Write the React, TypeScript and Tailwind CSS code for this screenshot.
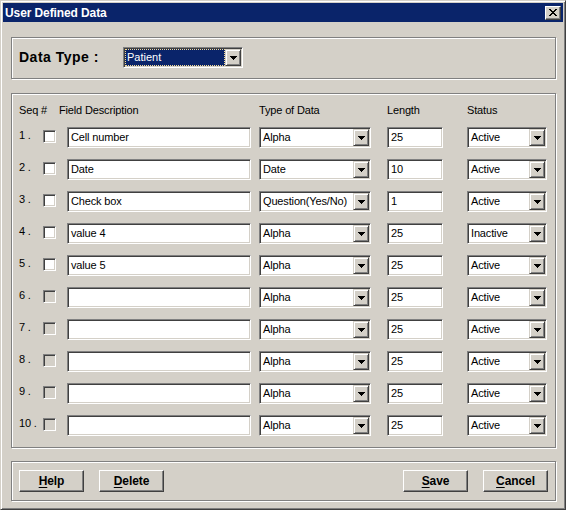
import React from "react";

const sunken =
  "border border-t-[#808080] border-l-[#808080] border-b-white border-r-white shadow-[inset_1px_1px_0_#404040,inset_-1px_-1px_0_#d4d0c8] p-[1px]";
const scrollBtn =
  "border border-t-[#d4d0c8] border-l-[#d4d0c8] border-b-[#404040] border-r-[#404040] shadow-[inset_1px_1px_0_#fff,inset_-1px_-1px_0_#808080] bg-[#d4d0c8]";
const etched = "border border-[#808080] shadow-[inset_1px_1px_0_#fff,1px_1px_0_#fff]";

const ROWS = [
  { desc: "Cell number", type: "Alpha", len: "25", status: "Active", on: true },
  { desc: "Date", type: "Date", len: "10", status: "Active", on: true },
  { desc: "Check box", type: "Question(Yes/No)", len: "1", status: "Active", on: true },
  { desc: "value 4", type: "Alpha", len: "25", status: "Inactive", on: true },
  { desc: "value 5", type: "Alpha", len: "25", status: "Active", on: true },
  { desc: "", type: "Alpha", len: "25", status: "Active", on: false },
  { desc: "", type: "Alpha", len: "25", status: "Active", on: false },
  { desc: "", type: "Alpha", len: "25", status: "Active", on: false },
  { desc: "", type: "Alpha", len: "25", status: "Active", on: false },
  { desc: "", type: "Alpha", len: "25", status: "Active", on: false },
];

function Arrow() {
  return (
    <svg width="7" height="4" viewBox="0 0 7 4" shapeRendering="crispEdges">
      <rect x="0" y="0" width="7" height="1" fill="#000" />
      <rect x="1" y="1" width="5" height="1" fill="#000" />
      <rect x="2" y="2" width="3" height="1" fill="#000" />
      <rect x="3" y="3" width="1" height="1" fill="#000" />
    </svg>
  );
}

function DropBtn() {
  return (
    <div className={`${scrollBtn} flex h-[17px] w-[16px] shrink-0 items-center justify-center`}>
      <Arrow />
    </div>
  );
}

function Combo({ value, width }: { value: string; width: string }) {
  return (
    <div className={`${sunken} flex h-[21px] ${width} bg-white`}>
      <div className="flex-1 overflow-hidden whitespace-nowrap pl-[2px] leading-[17px]">{value}</div>
      <DropBtn />
    </div>
  );
}

function CloseGlyph() {
  const rows = [0, 1, 2, 3, 4, 5, 6];
  return (
    <svg width="8" height="7" viewBox="0 0 8 7" shapeRendering="crispEdges">
      {rows.map((r) => (
        <g key={r}>
          <rect x={r} y={r} width="2" height="1" fill="#000" />
          <rect x={6 - r} y={r} width="2" height="1" fill="#000" />
        </g>
      ))}
    </svg>
  );
}

function Button({ k, rest }: { k: string; rest: string }) {
  return (
    <div className="flex h-[22px] w-[65px] items-center justify-center border border-t-white border-l-white border-b-[#404040] border-r-[#404040] bg-[#d4d0c8] text-[12px] font-bold tracking-[-0.1px] shadow-[inset_-1px_-1px_0_#808080]">
      <span>
        <span className="underline underline-offset-[2px]">{k}</span>
        {rest}
      </span>
    </div>
  );
}

export default function App() {
  return (
    <div className="h-[510px] w-[566px] border border-t-[#d4d0c8] border-l-[#d4d0c8] border-b-[#404040] border-r-[#404040] bg-[#d4d0c8] p-[2px] font-['Liberation_Sans',Arial,sans-serif] text-[11px] text-black shadow-[inset_1px_1px_0_#fff,inset_-1px_-1px_0_#808080]">
      {/* Title bar */}
      <div className="flex h-[19px] items-center justify-between bg-[#0a246a] pl-[2px] pr-[2px]">
        <span className="text-[12px] font-bold tracking-[-0.1px] text-white">User Defined Data</span>
        <div className="flex h-[14px] w-[16px] items-center justify-center border border-t-white border-l-white border-b-[#404040] border-r-[#404040] bg-[#d4d0c8] shadow-[inset_-1px_-1px_0_#808080]">
          <CloseGlyph />
        </div>
      </div>

      <div className="pl-[8px]">
        {/* Data type */}
        <div className={`${etched} mt-[15px] flex h-[42px] w-[545px] items-start pl-[7px] pt-[9px]`}>
          <div className="w-[104px] pt-[2px] text-[14px] font-bold tracking-[0.5px] leading-[16px]">Data Type :</div>
          <div className={`${sunken} flex h-[21px] w-[120px] bg-white`}>
            <div className="flex flex-1 bg-[#0a246a]">
              <div className="flex-1 border border-dotted border-[#f5db95] pl-[1px] leading-[15px] text-white">
                Patient
              </div>
            </div>
            <DropBtn />
          </div>
        </div>

        {/* Fields grid */}
        <div className={`${etched} mt-[14px] h-[355px] w-[545px] pl-[7px] pt-[9px] tracking-[-0.15px]`}>
          <div className="flex h-[14px] items-center leading-[14px]">
            <div className="w-[40px]">Seq #</div>
            <div className="w-[200px]">Field Description</div>
            <div className="w-[128px]">Type of Data</div>
            <div className="w-[80px]">Length</div>
            <div>Status</div>
          </div>
          <div className="mt-[10px] flex flex-col gap-[11px]">
            {ROWS.map((r, i) => (
              <div key={i} className="flex h-[21px] items-center">
                <div className="relative -top-[2px] w-[24px] whitespace-pre">{`${i + 1} .`}</div>
                <div className="relative -top-[1px] w-[24px]">
                  <div
                    className={`h-[13px] w-[13px] border border-t-[#808080] border-l-[#808080] border-b-white border-r-white shadow-[inset_1px_1px_0_#404040,inset_-1px_-1px_0_#d4d0c8] ${
                      r.on ? "bg-white" : "bg-[#d4d0c8]"
                    }`}
                  />
                </div>
                <div className={`${sunken} mr-[8px] h-[21px] w-[184px] bg-white pl-[3px] leading-[17px]`}>
                  {r.desc}
                </div>
                <div className="mr-[16px]">
                  <Combo value={r.type} width="w-[112px]" />
                </div>
                <div className={`${sunken} mr-[24px] h-[21px] w-[56px] bg-white pl-[3px] leading-[17px]`}>
                  {r.len}
                </div>
                <Combo value={r.status} width="w-[80px]" />
              </div>
            ))}
          </div>
        </div>

        {/* Buttons */}
        <div className={`${etched} mt-[13px] flex h-[40px] w-[545px] items-start justify-between px-[7px] pt-[8px]`}>
          <div className="flex gap-[15px]">
            <Button k="H" rest="elp" />
            <Button k="D" rest="elete" />
          </div>
          <div className="flex gap-[15px]">
            <Button k="S" rest="ave" />
            <Button k="C" rest="ancel" />
          </div>
        </div>
      </div>
    </div>
  );
}
